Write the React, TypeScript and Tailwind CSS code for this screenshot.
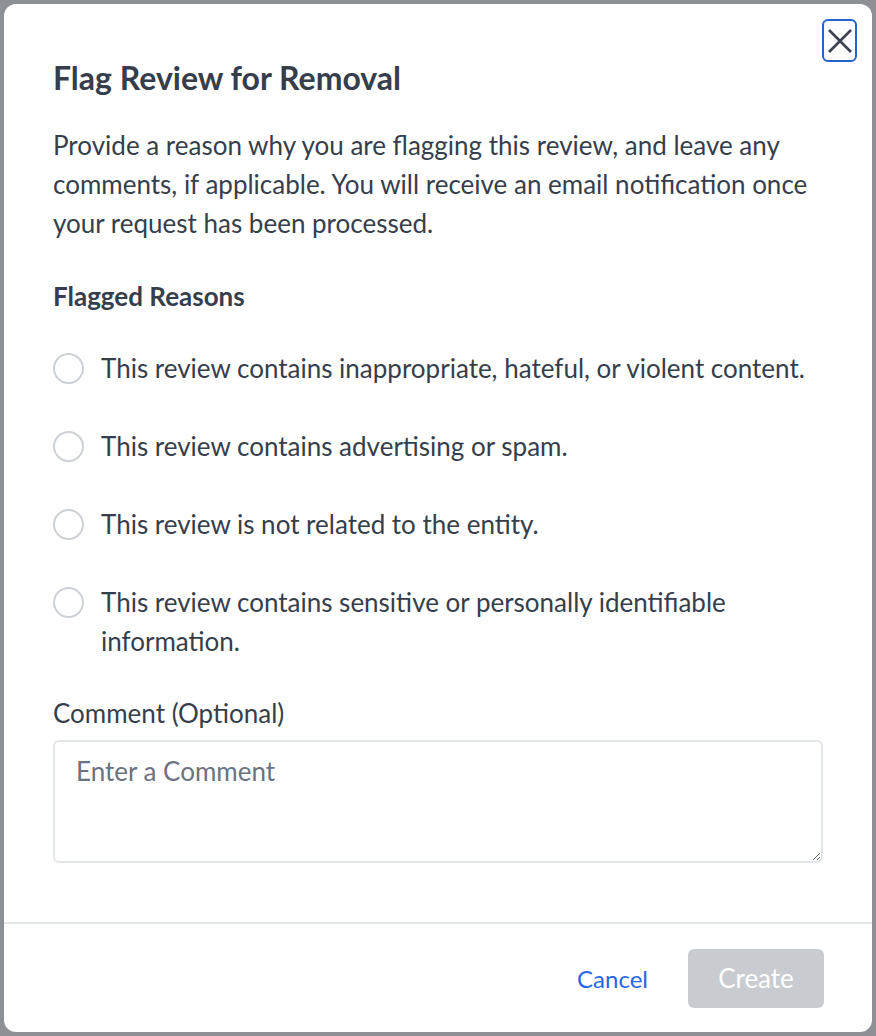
import React from "react";

const reasons = [
  "This review contains inappropriate, hateful, or violent content.",
  "This review contains advertising or spam.",
  "This review is not related to the entity.",
  "This review contains sensitive or personally identifiable information.",
];

export default function App() {
  return (
    <div
      className="w-[876px] h-[1036px] bg-[#8d9095] p-[4px] overflow-hidden"
      style={{ fontFamily: "Lato, 'Noto Sans', sans-serif" }}
    >
      <div className="relative w-full h-full bg-white rounded-[12px] flex flex-col text-[#363e4b]">
        <button className="absolute right-[15px] top-[15px] w-[35px] h-[43px] rounded-[6px] border-[2.5px] border-[#2563c9] flex items-center justify-center">
          <svg width="26" height="26" viewBox="0 0 26 26" fill="none">
            <path d="M2 2L24 24M24 2L2 24" stroke="#3b4250" strokeWidth="2.6" strokeLinecap="butt" />
          </svg>
        </button>
        <div className="flex-1 px-[49px] pt-[56px]">
          <h1 className="text-[32px] leading-[36px] font-bold">Flag Review for Removal</h1>
          <p className="mt-[30px] text-[26px] leading-[39px]">
            Provide a reason why you are flagging this review, and leave any comments, if applicable. You will receive an email notification once your request has been processed.
          </p>
          <h2 className="mt-[35px] text-[26px] leading-[36px] font-bold">Flagged Reasons</h2>
          <div className="mt-[35px] flex flex-col gap-[39px]">
            {reasons.map((r) => (
              <label key={r} className="flex items-start gap-[17px] text-[26px] leading-[39px]">
                <span className="mt-[4px] shrink-0 w-[31px] h-[31px] rounded-full border-2 border-[#cdd1d6] bg-white" />
                <span>{r}</span>
              </label>
            ))}
          </div>
          <div className="mt-[33px] text-[26px] leading-[39px]">Comment (Optional)</div>
          <textarea
            placeholder="Enter a Comment"
            className="mt-[7px] block w-full h-[123px] rounded-[6px] border-2 border-[#e2e5e9] px-[21px] py-[10px] text-[26px] leading-[39px] placeholder:text-[#6b7280] outline-none"
          />
        </div>
        <div className="border-t-2 border-[#e3e6ea] flex items-center justify-end gap-[40px] px-[48px] pt-[25px] pb-[24px]">
          <button className="text-[24px] text-[#2966e8]">Cancel</button>
          <button className="w-[136px] h-[59px] rounded-[6px] bg-[#c8ccd1] text-white text-[26px]">Create</button>
        </div>
      </div>
    </div>
  );
}
